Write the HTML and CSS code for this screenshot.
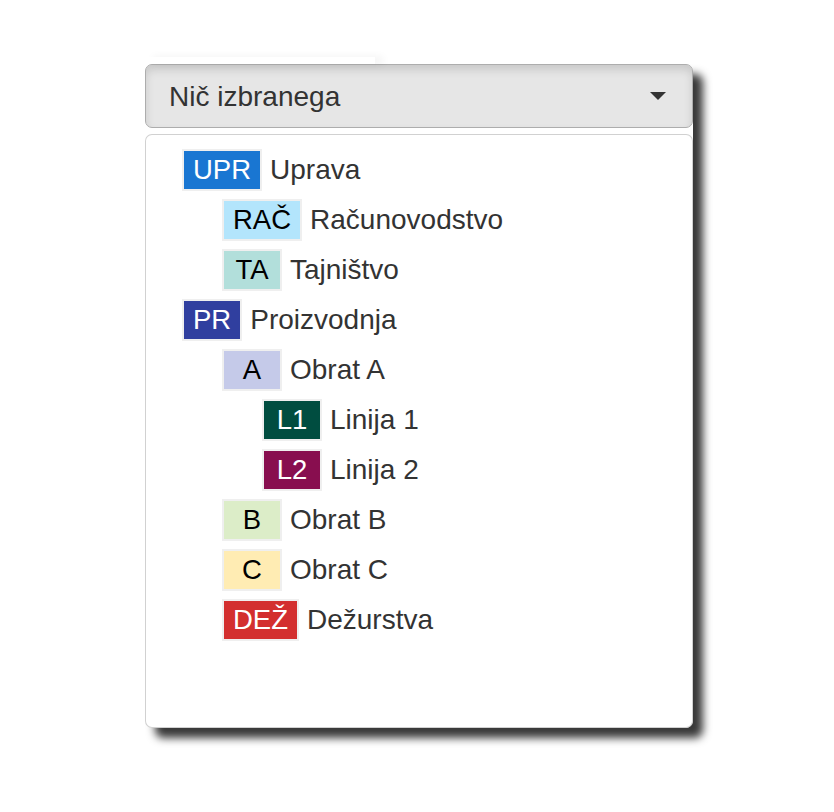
FILE: index.html
```html
<!DOCTYPE html>
<html lang="sl">
<head>
<meta charset="utf-8">
<title>Izbira enote</title>
<link rel="stylesheet" href="styles.css">
</head>
<body>
<div class="page">
  <div class="select">
    <div class="strip"></div>
    <button class="toggle" type="button">
      <span class="toggle-text">Nič izbranega</span>
      <span class="caret"></span>
    </button>
    <ul class="menu">
      <li class="item lvl0"><span class="badge b-upr">UPR</span><span class="label">Uprava</span></li>
      <li class="item lvl1"><span class="badge b-rac">RAČ</span><span class="label">Računovodstvo</span></li>
      <li class="item lvl1"><span class="badge b-ta">TA</span><span class="label">Tajništvo</span></li>
      <li class="item lvl0"><span class="badge b-pr">PR</span><span class="label">Proizvodnja</span></li>
      <li class="item lvl1"><span class="badge b-a">A</span><span class="label">Obrat A</span></li>
      <li class="item lvl2"><span class="badge b-l1">L1</span><span class="label">Linija 1</span></li>
      <li class="item lvl2"><span class="badge b-l2">L2</span><span class="label">Linija 2</span></li>
      <li class="item lvl1"><span class="badge b-b">B</span><span class="label">Obrat B</span></li>
      <li class="item lvl1"><span class="badge b-c">C</span><span class="label">Obrat C</span></li>
      <li class="item lvl1"><span class="badge b-dez">DEŽ</span><span class="label">Dežurstva</span></li>
    </ul>
  </div>
</div>
</body>
</html>
```

FILE: styles.css
```css
* {
  box-sizing: border-box;
}

html, body {
  margin: 0;
  padding: 0;
  background: #ffffff;
}

body {
  font-family: "Liberation Sans", Arial, Helvetica, sans-serif;
  font-size: 28px;
  color: #333333;
}

.page {
  padding: 64px 0 84px 145px;
}

.select {
  position: relative;
  width: 548px;
  display: flex;
  flex-direction: column;
  gap: 6px;
  border-radius: 8px;
  box-shadow: 10px 10px 9px rgba(0, 0, 0, 0.78);
}

.strip {
  position: absolute;
  left: 0;
  top: -7px;
  width: 230px;
  height: 7px;
  background: #ffffff;
  box-shadow: 8px 0 8px rgba(0, 0, 0, 0.06);
}

.toggle {
  display: flex;
  align-items: center;
  justify-content: space-between;
  width: 100%;
  height: 64px;
  margin: 0;
  padding: 0 26px 0 23px;
  font-family: inherit;
  font-size: 28px;
  color: #333333;
  background: #e6e6e6;
  border: 1px solid #adadad;
  border-radius: 7px;
  box-shadow: inset 0 5px 9px rgba(0, 0, 0, 0.125);
  text-align: left;
}

.toggle-text {
  padding-top: 2px;
}

.caret {
  width: 0;
  height: 0;
  border-left: 8px solid transparent;
  border-right: 8px solid transparent;
  border-top: 8px solid #333333;
}

.menu {
  list-style: none;
  margin: 0;
  padding: 10px 0;
  height: 594px;
  background: #ffffff;
  border: 1px solid rgba(0, 0, 0, 0.18);
  border-radius: 7px;
}

.item {
  display: flex;
  align-items: center;
  height: 50px;
}

.lvl0 { padding-left: 36px; }
.lvl1 { padding-left: 76px; }
.lvl2 { padding-left: 116px; }

.badge {
  display: inline-block;
  min-width: 60px;
  height: 42px;
  line-height: 38px;
  padding: 0 9px;
  text-align: center;
  border: 2px solid #efefef;
  font-size: 27.5px;
  color: #000000;
}

.label {
  margin-left: 8px;
  color: #333333;
}

.b-upr { background: #1976d2; color: #ffffff; }
.b-rac { background: #b3e5fc; }
.b-ta  { background: #b2dfdb; }
.b-pr  { background: #303f9f; color: #ffffff; }
.b-a   { background: #c5cae9; }
.b-l1  { background: #004d40; color: #ffffff; }
.b-l2  { background: #880e4f; color: #ffffff; }
.b-b   { background: #dcedc8; }
.b-c   { background: #ffecb3; }
.b-dez { background: #d32f2f; color: #ffffff; }
```
